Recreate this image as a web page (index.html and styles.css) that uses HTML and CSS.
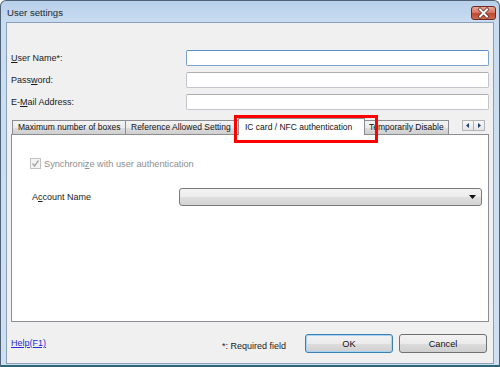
FILE: index.html
```html
<!DOCTYPE html>
<html>
<head>
<meta charset="utf-8">
<link rel="stylesheet" href="styles.css">
</head>
<body>
<div class="window">
  <div class="titlebar">
    <span class="title">User settings</span>
    <div class="close">
      <svg width="25" height="14" viewBox="0 0 25 14">
        <path d="M9 3.5 L16 10.5 M16 3.5 L9 10.5" stroke="#5a2a22" stroke-width="3.4" stroke-linecap="square"/>
        <path d="M9 3.5 L16 10.5 M16 3.5 L9 10.5" stroke="#ffffff" stroke-width="2" stroke-linecap="square"/>
      </svg>
    </div>
  </div>
  <div class="content">
    <div class="fields">
      <label class="lbl"><u>U</u>ser Name*:</label><div class="input focus"></div>
      <label class="lbl">Pass<u>w</u>ord:</label><div class="input"></div>
      <label class="lbl">E-<u>M</u>ail Address:</label><div class="input"></div>
    </div>
    <div class="tabstrip">
      <div class="tabs">
        <div class="tab t1">Maximum number of boxes</div>
        <div class="tab t2">Reference Allowed Setting</div>
        <div class="tab t3 active">IC card / NFC authentication</div>
        <div class="tab t4">Temporarily Disable</div>
      </div>
      <div class="scroller">
        <span class="sbtn"><svg width="10" height="9" viewBox="0 0 10 9"><path d="M6 2 L3 4.5 L6 7 Z" fill="#1b3c6e"/></svg></span>
        <span class="sbtn"><svg width="10" height="9" viewBox="0 0 10 9"><path d="M4 2 L7 4.5 L4 7 Z" fill="#1b3c6e"/></svg></span>
      </div>
      <div class="highlight"></div>
    </div>
    <div class="panel">
      <div class="check-row">
        <span class="checkbox"><svg width="9" height="9" viewBox="0 0 9 9"><path d="M1.5 4.5 L3.5 7 L7.5 1.5" fill="none" stroke="#a8a8a8" stroke-width="1.4"/></svg></span>
        <span class="check-text">Synchroni<u>z</u>e with user authentication</span>
      </div>
      <div class="account-row">
        <span class="acc-label">A<u>c</u>count Name</span>
        <div class="combo"><svg width="8" height="5" viewBox="0 0 8 5"><path d="M0 0 L7 0 L3.5 4 Z" fill="#111"/></svg></div>
      </div>
    </div>
    <div class="footer">
      <a class="help" href="#">Help(F1)</a>
      <span class="req">*: Required field</span>
      <div class="btn default">OK</div>
      <div class="btn">Cancel</div>
    </div>
  </div>
</div>
</body>
</html>
```
FILE: styles.css
```css
* { box-sizing: border-box; }
html, body { margin: 0; padding: 0; background: #ffffff; }
body {
  font-family: "Liberation Sans", Arial, sans-serif;
  font-size: 9px;
  color: #1a1a1a;
}
.window {
  width: 500px;
  height: 367px;
  display: flex;
  flex-direction: column;
  background: linear-gradient(180deg, #b8d0ea 0px, #c9dcf1 22px, #cfe0f2 100%);
  border: 1px solid #4f6276;
  border-bottom: none;
  border-radius: 6px 6px 0 0;
  padding: 0 5px 3px 5px;
  position: relative;
}
.window::after {
  content: "";
  position: absolute;
  left: 0; right: 0; bottom: 0;
  height: 2px;
  background: #2d6677;
}
.titlebar {
  height: 21px;
  display: flex;
  align-items: center;
  justify-content: space-between;
  padding-left: 1px;
}
.title {
  font-size: 9.6px;
  color: #1e2a36;
  padding-top: 1px;
}
.close {
  width: 25px;
  height: 14px;
  margin-top: 2px;
  margin-right: -2px;
  border: 1px solid #6b2c22;
  border-radius: 3px;
  background: linear-gradient(180deg, #e9a595 0%, #d77a66 45%, #c0472f 55%, #cf6a52 100%);
  display: flex;
  align-items: center;
  justify-content: center;
}
.close svg { display: block; margin: -1px; }
.content {
  flex: 1;
  background: #f0f0f0;
  border: 1px solid #8aa0b8;
  display: flex;
  flex-direction: column;
  padding: 0 6px 0 4px;
}
.fields {
  margin-top: 27px;
  display: grid;
  grid-template-columns: 175px 303px;
  grid-auto-rows: 16px;
  row-gap: 6px;
  align-items: center;
}
.lbl { padding-left: 0; line-height: 16px; }
.input {
  height: 16px;
  background: #ffffff;
  border: 1px solid #c2c6cc;
  border-top-color: #abadb3;
  border-radius: 2px;
}
.input.focus {
  border-color: #7da2ce;
  border-top-color: #5b8fc5;
}
.tabstrip {
  position: relative;
  z-index: 2;
  margin-top: 8px;
  height: 16px;
  display: flex;
  align-items: flex-start;
}
.tabs {
  display: flex;
  align-items: flex-end;
  height: 16px;
  padding-left: 1px;
}
.tab {
  height: 14px;
  line-height: 13px;
  border: 1px solid #8c8e94;
  border-bottom: none;
  background: linear-gradient(180deg, #f3f3f3 0%, #ebebeb 50%, #dddddd 51%, #cfcfcf 100%);
  padding-left: 5px;
  white-space: nowrap;
  overflow: hidden;
  color: #111;
  font-size: 8.5px;
}
.t1 { width: 114px; }
.t2 { width: 115px; margin-left: -1px; }
.t3 { width: 127px; margin-left: -2px; }
.t4 { width: 86px; margin-left: -2px; }
.tab.active {
  height: 17px;
  margin-bottom: -1px;
  background: #ffffff;
  line-height: 16px;
  padding-left: 6px;
  position: relative;
  z-index: 1;
}
.scroller {
  margin-left: auto;
  margin-right: 2px;
  margin-top: 2px;
  display: flex;
}
.sbtn {
  width: 12px;
  height: 11px;
  border: 1px solid #b4b4b4;
  background: linear-gradient(180deg, #f7f7f7, #e4e4e4);
  display: flex;
  align-items: center;
  justify-content: center;
}
.sbtn + .sbtn { margin-left: -1px; }
.sbtn svg { display: block; }
.highlight {
  position: absolute;
  left: 223px;
  top: -3px;
  width: 144px;
  height: 28px;
  border: 3px solid #ff0000;
  z-index: 3;
}
.panel {
  height: 188px;
  background: #ffffff;
  border: 1px solid #8c8e94;
  position: relative;
  z-index: 1;
  margin-right: -2px;
}
.check-row {
  margin-top: 23px;
  margin-left: 18px;
  display: flex;
  align-items: center;
  height: 11px;
}
.checkbox {
  width: 11px;
  height: 11px;
  border: 1px solid #c2c2c2;
  background: #f4f4f4;
  display: flex;
  align-items: center;
  justify-content: center;
}
.checkbox svg { display: block; }
.check-text {
  margin-left: 3px;
  color: #8e8e8e;
  font-size: 9.2px;
}
.account-row {
  margin-top: 19px;
  margin-left: 20px;
  display: flex;
  align-items: center;
  height: 18px;
}
.acc-label { width: 147px; }
.combo {
  width: 303px;
  height: 18px;
  border: 1px solid #7a7a7a;
  border-radius: 3px;
  background: linear-gradient(180deg, #f3f3f3 0%, #ececec 50%, #dfdfdf 51%, #d3d3d3 100%);
  display: flex;
  align-items: center;
  justify-content: flex-end;
  padding-right: 4px;
}
.combo svg { display: block; }
.footer {
  margin-top: 12px;
  height: 19px;
  display: flex;
  align-items: center;
}
.help {
  flex: 1;
  color: #2b2bd9;
  text-decoration: underline;
  margin-top: -1px;
}
.req {
  margin-right: 19px;
  margin-top: 5px;
}
.btn {
  width: 88px;
  height: 19px;
  border: 1px solid #707070;
  border-radius: 3px;
  background: linear-gradient(180deg, #f2f2f2 0%, #ebebeb 50%, #dddddd 51%, #cfcfcf 100%);
  display: flex;
  align-items: center;
  justify-content: center;
  font-size: 9.2px;
  color: #111;
}
.btn.default {
  border-color: #3c7fb1;
  box-shadow: inset 0 0 0 1px #a6d4f2;
}
.btn + .btn { margin-left: 6px; }
```
